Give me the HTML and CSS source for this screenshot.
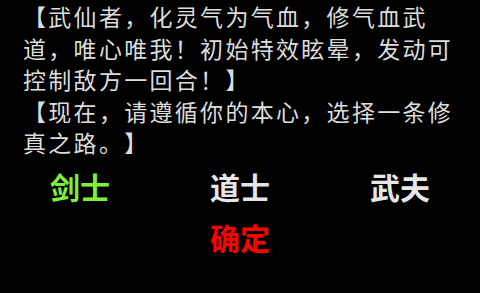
FILE: index.html
```html
<!DOCTYPE html>
<html lang="zh">
<head>
<meta charset="utf-8">
<link rel="stylesheet" href="styles.css">
</head>
<body>
<div class="screen">
  <div class="story">
    <p class="para">【武仙者，化灵气为气血，修气血武<br>道，唯心唯我！初始特效眩晕，发动可<br>控制敌方一回合！】</p>
    <p class="para">【现在，请遵循你的本心，选择一条修<br>真之路。】</p>
  </div>
  <div class="options">
    <div class="option option-selected">剑士</div>
    <div class="option">道士</div>
    <div class="option">武夫</div>
  </div>
  <div class="confirm">确定</div>
</div>
</body>
</html>
```

FILE: styles.css
```css
html, body {
  margin: 0;
  padding: 0;
  background: #000;
}
.screen {
  width: 480px;
  height: 293px;
  overflow: hidden;
  background: #000;
  font-family: "Noto Sans CJK SC", "Noto Sans", sans-serif;
}
.story {
  padding-left: 23px;
  padding-top: 1px;
}
.para {
  margin: 0;
  color: #dcdcdc;
  font-size: 23px;
  letter-spacing: 2.3px;
  line-height: 31.5px;
  white-space: nowrap;
  text-spacing-trim: space-all;
  font-feature-settings: "halt" 0, "chws" 0;
}
.options {
  display: grid;
  grid-template-columns: 1fr 1fr 1fr;
  margin-top: 10px;
}
.option {
  text-align: center;
  font-size: 30px;
  font-weight: bold;
  line-height: 34px;
  color: #e6e6e6;
}
.option-selected {
  color: #7ff03a;
}
.confirm {
  margin-top: 17px;
  text-align: center;
  font-size: 30px;
  font-weight: bold;
  line-height: 34px;
  color: #ff0000;
}
```
